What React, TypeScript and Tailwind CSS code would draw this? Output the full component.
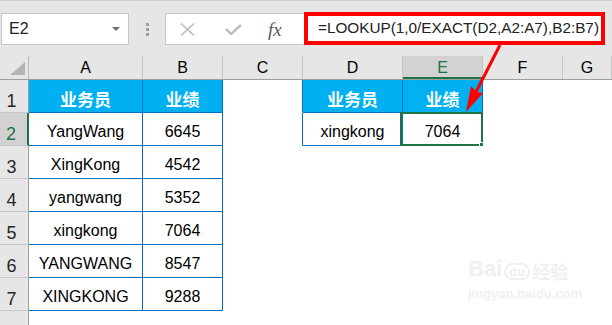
import React from "react";

const rowGrid = "grid grid-cols-[29px_114px_80px_80px_100px_80px_80px_1fr] grid-rows-[minmax(0,1fr)]";

const letters = ["A", "B", "C", "D", "E", "F", "G"];

const rows: string[][] = [
  ["业务员", "业绩", "", "业务员", "业绩", "", ""],
  ["YangWang", "6645", "", "xingkong", "7064", "", ""],
  ["XingKong", "4542", "", "", "", "", ""],
  ["yangwang", "5352", "", "", "", "", ""],
  ["xingkong", "7064", "", "", "", "", ""],
  ["YANGWANG", "8547", "", "", "", "", ""],
  ["XINGKONG", "9288", "", "", "", "", ""],
];

const Cell = ({ r, c, text }: { r: number; c: number; text: string }) => {
  const inTable = c <= 1 || ((c === 3 || c === 4) && r <= 1);
  const rightBlue = inTable || (c === 2 && r <= 1);
  const header = inTable && r === 0;
  const selected = r === 1 && c === 4;

  return (
    <div
      className={
        "relative flex items-center justify-center pt-[5px] leading-none border-r border-b " +
        (rightBlue ? "border-r-[#0070c0] " : "border-r-transparent ") +
        (inTable ? "border-b-[#0070c0] " : "border-b-transparent ") +
        (header
          ? "bg-[#00b0f0] text-white font-bold text-[17px] font-['Noto_Sans_CJK_SC',sans-serif]"
          : "bg-white text-black text-[16px]")
      }
    >
      {text}
      {selected && (
        <div className="absolute left-[-3px] top-[-1px] right-[-1px] bottom-[-1px] border-2 border-[#217346]">
          <div className="absolute right-[-4px] bottom-[-4px] w-[6px] h-[6px] bg-[#217346] border border-white" />
        </div>
      )}
    </div>
  );
};

export default function App() {
  return (
    <div className="relative w-[612px] h-[325px] overflow-hidden bg-white font-['Liberation_Sans',Arial,sans-serif]">
      {/* toolbar / formula bar */}
      <div className="h-[56px] bg-[#e6e6e6] border-t border-[#d0d0d0] pt-[12px] flex items-start">
        <div className="ml-px w-[128px] h-[32px] bg-white border border-[#c6c6c6] flex items-center justify-between pl-[7px] pr-[8px] text-[16px] text-[#222]">
          <span>E2</span>
          <svg width="8" height="4" viewBox="0 0 8 4">
            <path d="M0 0h8L4 4z" fill="#6f6f6f" />
          </svg>
        </div>
        <div className="w-[36px] h-[32px] flex flex-col items-center justify-center gap-[2px]">
          <div className="w-[3px] h-[3px] bg-[#9e9e9e]" />
          <div className="w-[3px] h-[3px] bg-[#9e9e9e]" />
          <div className="w-[3px] h-[3px] bg-[#9e9e9e]" />
        </div>
        <div className="w-[139px] h-[32px] bg-white border border-[#c6c6c6] border-r-0 flex items-center">
          <svg className="ml-[14px]" width="15" height="13" viewBox="0 0 15 13">
            <path d="M1 0.5l13 12M14 0.5l-13 12" stroke="#bdbdbd" strokeWidth="1.6" fill="none" />
          </svg>
          <svg className="ml-[30px]" width="17" height="11" viewBox="0 0 17 11">
            <path d="M1 5l5 5L16 1" stroke="#bdbdbd" strokeWidth="2.4" fill="none" />
          </svg>
          <span className="ml-[26px] text-[19px] italic font-['Liberation_Serif',serif] text-[#595959] leading-none">
            fx
          </span>
        </div>
        <div className="w-[301px] h-[33px] mt-[-1px] bg-white border-[4px] border-[#ff0000] flex items-center pl-[10px] text-[15.3px] text-[#222] whitespace-nowrap">
          =LOOKUP(1,0/EXACT(D2,A2:A7),B2:B7)
        </div>
      </div>

      {/* column headers */}
      <div className={rowGrid + " h-[24px] bg-[#e6e6e6] border-b border-[#9e9e9e]"}>
        <div className="border-r border-[#b8b8b8] relative">
          <svg className="absolute left-[10px] top-[6px]" width="15" height="13" viewBox="0 0 15 13">
            <path d="M15 0V13H0z" fill="#b4b4b4" />
          </svg>
        </div>
        {letters.map((l) => (
          <div
            key={l}
            className={
              "flex items-center justify-center text-[16px] leading-none border-r border-[#c4c4c4] " +
              (l === "E" ? "bg-[#d2d2d2] text-[#217346] border-b-2 border-b-[#217346] pt-[2px]" : "text-black")
            }
          >
            {l}
          </div>
        ))}
        <div />
      </div>

      {/* data rows */}
      {rows.map((row, r) => (
        <div key={r} className={rowGrid + " h-[33px]"}>
          <div
            className={
              "flex items-center justify-center pt-[10px] pr-[5px] text-[18px] leading-none border-b border-b-[#c8c8c8] " +
              (r === 1
                ? "bg-[#d2d2d2] text-[#217346] border-r-2 border-r-[#217346]"
                : "bg-[#e6e6e6] text-[#262626] border-r border-r-[#9e9e9e]")
            }
          >
            {r + 1}
          </div>
          {row.map((t, c) => (
            <Cell key={c} r={r} c={c} text={t} />
          ))}
          <div />
        </div>
      ))}

      {/* row 8, cut off */}
      <div className={rowGrid + " h-[33px]"}>
        <div className="bg-[#e6e6e6] border-r border-r-[#9e9e9e]" />
      </div>

      {/* watermark */}
      <div className="absolute left-[468px] top-[258px] flex flex-col items-start text-[#f0f0f0] select-none">
        <div className="flex items-end leading-none">
          <span className="text-[22px] font-bold">Bai</span>
          <span className="relative mx-[2px] text-[13px] font-bold border-2 border-[#f0f0f0] rounded-full px-[3px]">
            du
          </span>
          <span className="text-[18px] font-bold font-['Noto_Sans_CJK_SC',sans-serif]">经验</span>
        </div>
        <span className="mt-[4px] text-[13px] font-bold">jingyan.baidu.com</span>
      </div>

      {/* red arrow */}
      <svg className="absolute left-0 top-0 pointer-events-none" width="612" height="325" viewBox="0 0 612 325">
        <line x1="500" y1="45" x2="476" y2="92" stroke="#ff0000" strokeWidth="3" />
        <path d="M466 112L471 86L477 92L483 93z" fill="#ff0000" />
      </svg>
    </div>
  );
}
